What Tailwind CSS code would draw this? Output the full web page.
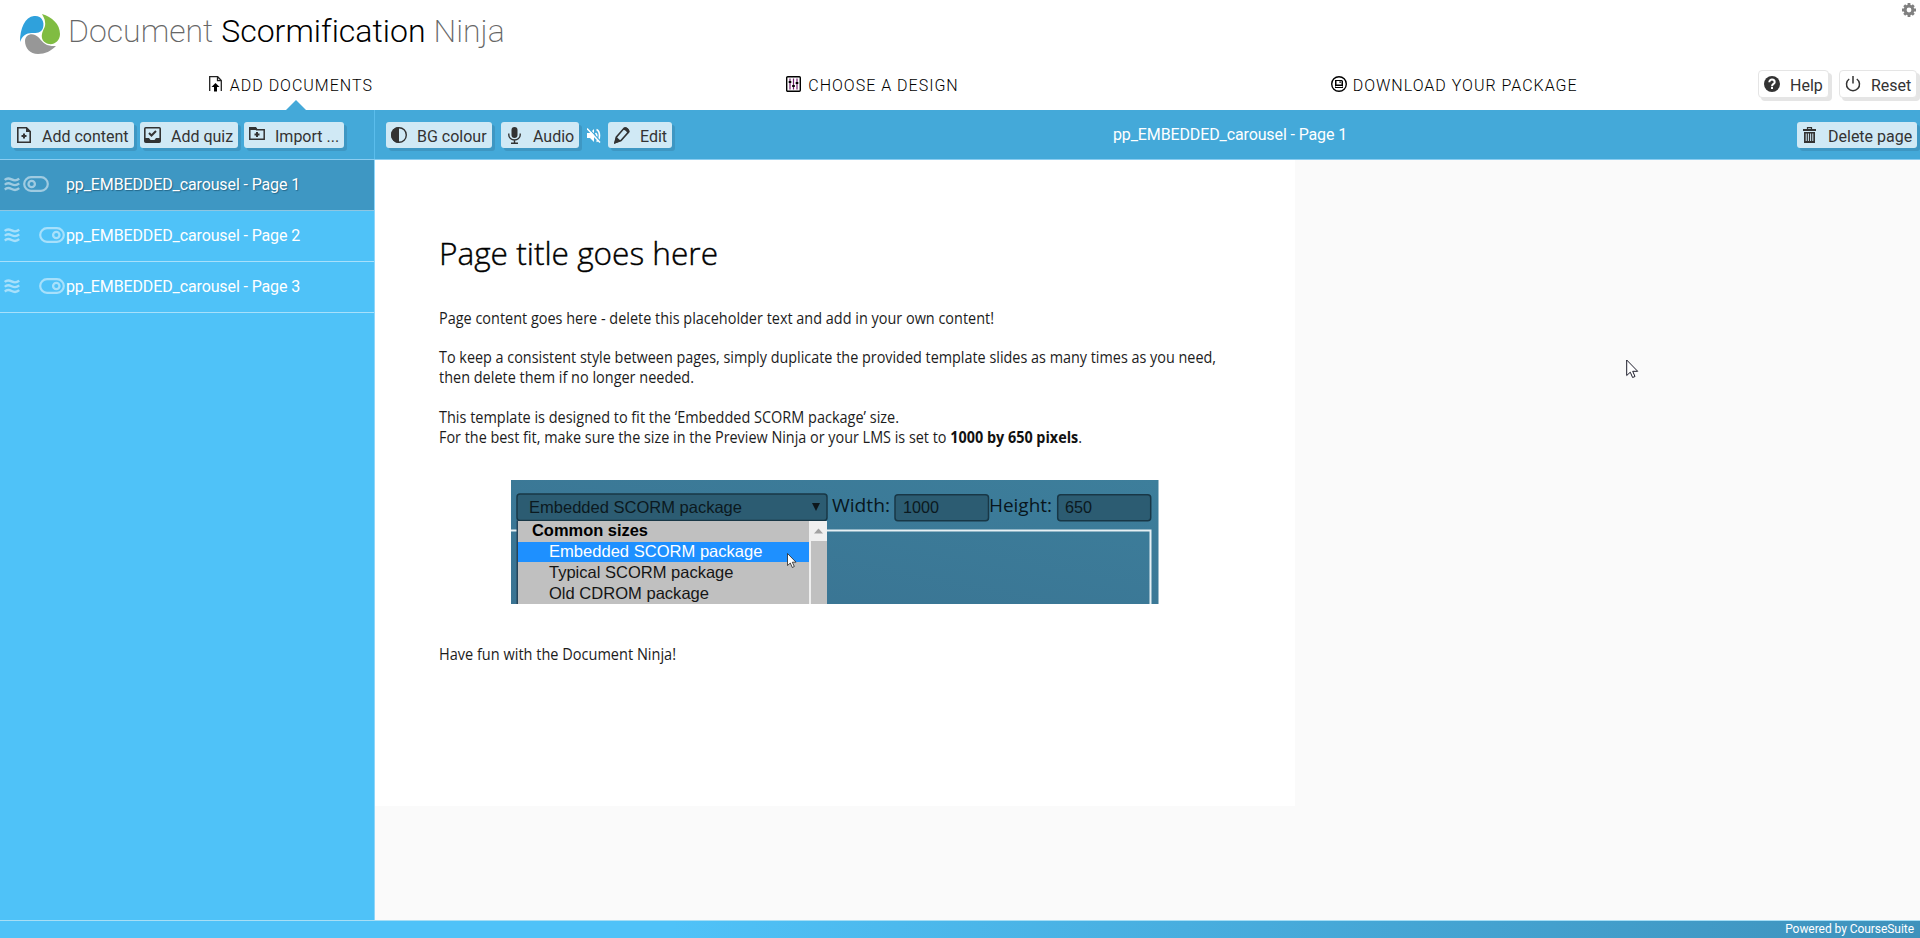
<!DOCTYPE html>
<html lang="en">
<head>
<meta charset="utf-8">
<title>Document Scormification Ninja</title>
<script src="https://cdn.jsdelivr.net/npm/@tailwindcss/browser@4"></script>
</head>
<body class="relative flex h-[938px] w-[1920px] flex-col overflow-hidden bg-white font-['Roboto',sans-serif] text-base leading-[26px] text-[#333]">

<header class="flex h-[110px] shrink-0 flex-col">
  <div class="flex h-[66px] items-start justify-between pl-5 pr-[4px]">
    <div class="flex">
      <svg class="mt-[14px] h-10 w-10" viewBox="0 0 40 40">
        <path fill="#2fa1dc" d="M0 28C0 14 5 3 14 2c7-1 11 5 9 12c-2 5-6 5-11 5C6 19 2 22 0 28z"/>
        <path fill="#80bc42" d="M22 0c10 3 18 10 18 20c0 7-6 11-11 10c-6-1-8-6-7-10c1-5 4-7 3-12C25 5 23 2 22 0z"/>
        <path fill="#979797" d="M5 27c0-5 5-8 10-6c5 2 6 7 12 10c3 1 6 1 9 1c-5 5-11 8-18 8C10 40 5 34 5 27z"/>
      </svg>
      <h1 class="mt-[11px] ml-2 whitespace-nowrap text-[32px] leading-10 font-light tracking-[0.02px] text-black"><span class="font-extralight text-[#666]">Document</span> Scormification <span class="font-extralight text-[#666]">Ninja</span></h1>
    </div>
    <svg class="mt-[3px] h-[14px] w-[14px]" viewBox="0 0 14 14"><circle cx="7" cy="7" r="3.900" fill="none" stroke="#808080" stroke-width="3"/><path stroke="#808080" stroke-width="2.800" d="M7 0v2.500M7 11.500V14M0 7h2.500M11.500 7H14M2.200 2.200l1.600 1.600M10.200 10.200l1.600 1.600M2.200 11.800l1.600-1.600M10.200 3.800l1.600-1.600"/></svg>
  </div>
  <div class="flex h-11 items-start">
    <nav class="grid w-[1745px] grid-cols-3 pt-[7px] font-light tracking-[1px] text-black">
      <a class="flex justify-center gap-2"><svg class="mt-[3px] h-4 w-[13px]" viewBox="0 0 13 16"><path fill="none" stroke="#222" stroke-width="1.300" d="M.7 15V.7h8L12.300 4.500V15M8.500.7v4h4"/><path d="M6.500 7l4 4H8v4.500H5V11H2.500z"/></svg>ADD DOCUMENTS</a>
      <a class="flex justify-center gap-[7px]"><svg class="mt-[3px] h-4 w-[15px]" viewBox="0 0 15 16"><rect x=".7" y=".7" width="13.600" height="14.600" rx="1" fill="none" stroke="#000" stroke-width="1.400"/><path stroke="#70206f" stroke-width="1.200" d="M4 2.500v11M7.500 2.500v11M11 2.500v11"/><path d="M2.700 5h2.600v2H2.700zM6.200 9h2.600v2H6.200zM9.700 6h2.600v2H9.700z"/></svg>CHOOSE A DESIGN</a>
      <a class="flex justify-center gap-[6px]"><svg class="mt-[3px] h-4 w-4" viewBox="0 0 16 16"><circle cx="8" cy="8" r="7.300" fill="none" stroke="#000" stroke-width="1.400"/><path fill-rule="evenodd" d="M4 4h7l1 1v7H4zM5.500 5v3.500h5V5zM4.500 10v1h7v-1z"/><path d="M8.500 5.300h1.200v1.700H8.500z"/></svg>DOWNLOAD YOUR PACKAGE</a>
    </nav>
    <div class="flex gap-[10px] pl-[13px] pt-1">
      <button class="flex h-7 w-[71px] rounded-sm border border-[#e5e5e5] bg-white pl-[5px] shadow-[3px_3px_0_#e5e5e5]"><svg class="mt-[5px] h-4 w-4" viewBox="0 0 16 16"><circle cx="8" cy="8" r="8" fill="#333"/><path fill="none" stroke="#fff" stroke-width="2" d="M5.300 6.200c0-3.500 5.400-3.400 5.400 0c0 1.700-2.700 1.800-2.700 4"/><path fill="#fff" d="M7 11h2v2H7z"/></svg><span class="ml-[10px] mt-[2px]">Help</span></button>
      <button class="flex h-7 w-[78px] rounded-sm border border-[#e5e5e5] bg-white pl-[5px] shadow-[3px_3px_0_#e5e5e5]"><svg class="mt-[5px] h-4 w-4" viewBox="0 0 16 16"><path fill="none" stroke="#333" stroke-width="1.500" d="M8 0v7.500M4.200 3a6.500 6.500 0 1 0 7.600 0"/></svg><span class="ml-[10px] mt-[2px]">Reset</span></button>
    </div>
  </div>
</header>
<div class="absolute left-[286px] top-[100px] h-[10px] w-5 bg-[#44a9d9] [clip-path:polygon(50%_0,100%_100%,0_100%)]"></div>

<div class="flex h-[50px] shrink-0 border-b border-[#8ccdf0] bg-[#44a9d9]">
  <div class="flex w-[375px] gap-[6px] border-r border-[#5bbdec] pl-[11px] pt-3">
    <button class="flex h-[26px] w-[123px] rounded-[3px] bg-[#d0e9f5] pl-[6px] shadow-[3px_3px_0_#3e97c3]"><svg class="mt-[5px] h-4 w-[14px]" viewBox="0 0 14 16"><path fill="none" stroke="#333" stroke-width="1.600" d="M.8.8h8.700l3.700 3.700v10.700H.8z"/><path fill="#333" d="M9 0l5 5H9zM6 6.500h2v1.500h1.500v2H8v1.500H6V10H4.500V8H6z"/></svg><span class="ml-[11px] mt-[2px]">Add content</span></button>
    <button class="flex h-[26px] w-[98px] rounded-[3px] bg-[#d0e9f5] pl-[4px] shadow-[3px_3px_0_#3e97c3]"><svg class="mt-[5px] h-4 w-[17px]" viewBox="0 0 17 16"><rect x=".8" y=".8" width="15.400" height="14.400" rx="1" fill="none" stroke="#333" stroke-width="1.600"/><path fill="#333" d="M1 11h4l1.500 2h4l1.500-2h4v4H1z"/><path fill="none" stroke="#333" stroke-width="2" d="M5 6l2.500 2.500L12 4"/></svg><span class="ml-[10px] mt-[2px]">Add quiz</span></button>
    <button class="flex h-[26px] w-[100px] rounded-[3px] bg-[#d0e9f5] pl-[5px] shadow-[3px_3px_0_#3e97c3]"><svg class="mt-[5px] h-[13px] w-4" viewBox="0 0 16 13"><path fill="none" stroke="#333" stroke-width="1.500" d="M.8 12.200V.8H6l1.500 2h7.700v9.400z"/><path fill="#333" d="M0 0h7l2 3H0zM7 5h2v1.500h1.500v2H9V10H7V8.500H5.500v-2H7z"/></svg><span class="ml-[10px] mt-[2px]">Import ...</span></button>
  </div>
  <div class="flex w-[738px] pl-[11px] pt-3">
    <button class="flex h-[26px] w-[106px] rounded-[3px] bg-[#d0e9f5] pl-[5px] shadow-[3px_3px_0_#3e97c3]"><svg class="mt-[5px] h-4 w-4" viewBox="0 0 16 16"><circle cx="8" cy="8" r="7.300" fill="none" stroke="#333" stroke-width="1.400"/><path fill="#333" d="M8 0a8 8 0 0 0 0 16z"/></svg><span class="ml-[10px] mt-[2px] whitespace-nowrap">BG colour</span></button>
    <button class="ml-[9px] flex h-[26px] w-[78px] rounded-[3px] bg-[#d0e9f5] pl-[7px] shadow-[3px_3px_0_#3e97c3]"><svg class="mt-[5px] h-[17px] w-[13px]" viewBox="0 0 13 17"><rect x="3.500" width="6" height="11" rx="3" fill="#333"/><path fill="none" stroke="#333" stroke-width="1.400" d="M.8 6.500v1.500a5.700 5 0 0 0 11.400 0V6.500M6.500 13v3M3 16.200h7"/></svg><span class="ml-[12px] mt-[2px]">Audio</span></button>
    <svg class="ml-2 mt-[6px] h-[15px] w-[14px]" viewBox="0 0 14 15"><path fill="#fff" d="M0 5h3l4-4v13l-4-4H0z"/><path fill="none" stroke="#fff" stroke-width="1.600" d="M8.500 5c1.500 1.500 1.500 3.500 0 5M9.500 1.500c4 2 4 10 0 12"/><path stroke="#44a9d9" stroke-width="1.200" d="M1.500 0l12.500 14"/><path stroke="#fff" stroke-width="1.500" d="M0 .5l13 14"/></svg>
    <button class="ml-[7px] flex h-[26px] w-[64px] rounded-[3px] bg-[#d0e9f5] pl-[6px] shadow-[3px_3px_0_#3e97c3]"><svg class="mt-[5px] h-[17px] w-4" viewBox="0 0 16 17"><path fill="none" stroke="#333" stroke-width="1.600" d="M1 15.500l1.500-5.500L10 1.300c1.800-1 5 1.700 4.500 3.800L7 13.500z"/><path fill="#333" d="M0 17l2-7.500L7 14zM8.500 2.500L10.500.5c2-.8 5.500 2 5 4.500l-2 2c0-2-2.500-4.500-5-4.500z"/></svg><span class="ml-[10px] mt-[2px]">Edit</span></button>
  </div>
  <div class="w-[684px] pt-[12px] font-normal tracking-[-0.12px] text-white">pp_EMBEDDED_carousel - Page 1</div>
  <button class="mt-3 flex h-[26px] w-[120px] rounded-[3px] bg-[#d0e9f5] pl-[6px] shadow-[3px_3px_0_#3e97c3]"><svg class="mt-[5px] h-4 w-[13px]" viewBox="0 0 13 16"><path fill="none" stroke="#333" stroke-width="1.200" d="M4.500 2V.6h4V2"/><path fill="#333" d="M0 2h13v2H0z"/><path fill="#333" fill-rule="evenodd" d="M1 5h11v11H1zM2.700 6.500V14h1V6.500zM4.900 6.500V14h1V6.500zM7.100 6.500V14h1V6.500zM9.300 6.500V14h1V6.500z"/></svg><span class="ml-[12px] mt-[2px] whitespace-nowrap">Delete page</span></button>
</div>

<div class="flex h-[760px] shrink-0">
  <aside class="w-[375px] border-r border-[#8fd6fa] bg-[#4fc2f8] text-white">
    <div class="flex h-[51px] items-center border-b border-[#8ec6e2] bg-[#3e97c3] pl-1 pb-[2px]">
      <svg class="h-4 w-4 shrink-0" viewBox="0 0 16 16"><path fill="none" stroke="#9fcbe1" stroke-width="2.400" d="M.8 4c2-2.200 4.200-2 6.800-.6s5 1.500 7.600-.8M.8 8.800c2-2.200 4.200-2 6.800-.6s5 1.500 7.600-.8M.8 13.600c2-2.200 4.200-2 6.800-.6s5 1.500 7.600-.8"/></svg>
      <svg class="ml-[3px] h-4 w-[26px] shrink-0" viewBox="0 0 26 16"><rect x="1.200" y="1.200" width="23.600" height="13.600" rx="6.800" fill="none" stroke="#9fcbe1" stroke-width="2.200"/><circle cx="8.700" cy="8" r="3.200" fill="none" stroke="#9fcbe1" stroke-width="2.300"/></svg>
      <span class="ml-[17px] mt-[2px] tracking-[-0.12px] [text-shadow:1px_1px_1px_#24678a]">pp_EMBEDDED_carousel - Page 1</span>
    </div>
    <div class="flex h-[51px] items-center border-b border-[#a7e0fb] pl-1 pb-[2px]">
      <svg class="h-4 w-4 shrink-0" viewBox="0 0 16 16"><path fill="none" stroke="#a7e0fb" stroke-width="2.400" d="M.8 4c2-2.200 4.200-2 6.800-.6s5 1.500 7.600-.8M.8 8.800c2-2.200 4.200-2 6.800-.6s5 1.500 7.600-.8M.8 13.600c2-2.200 4.200-2 6.800-.6s5 1.500 7.600-.8"/></svg>
      <svg class="ml-[19px] h-4 w-[26px] shrink-0" viewBox="0 0 26 16"><rect x="1.200" y="1.200" width="23.600" height="13.600" rx="6.800" fill="none" stroke="#a7e0fb" stroke-width="2.200"/><circle cx="17.300" cy="8" r="3.200" fill="none" stroke="#a7e0fb" stroke-width="2.300"/></svg>
      <span class="ml-[1px] mt-[2px] tracking-[-0.12px]">pp_EMBEDDED_carousel - Page 2</span>
    </div>
    <div class="flex h-[51px] items-center border-b border-[#a7e0fb] pl-1 pb-[2px]">
      <svg class="h-4 w-4 shrink-0" viewBox="0 0 16 16"><path fill="none" stroke="#a7e0fb" stroke-width="2.400" d="M.8 4c2-2.200 4.200-2 6.800-.6s5 1.500 7.600-.8M.8 8.800c2-2.200 4.200-2 6.800-.6s5 1.500 7.600-.8M.8 13.600c2-2.200 4.200-2 6.800-.6s5 1.500 7.600-.8"/></svg>
      <svg class="ml-[19px] h-4 w-[26px] shrink-0" viewBox="0 0 26 16"><rect x="1.200" y="1.200" width="23.600" height="13.600" rx="6.800" fill="none" stroke="#a7e0fb" stroke-width="2.200"/><circle cx="17.300" cy="8" r="3.200" fill="none" stroke="#a7e0fb" stroke-width="2.300"/></svg>
      <span class="ml-[1px] mt-[2px] tracking-[-0.12px]">pp_EMBEDDED_carousel - Page 3</span>
    </div>
  </aside>
  <main class="flex-1 bg-[#fafafa]">
    <!-- Slide preview -->
    <svg class="block h-[646px] w-[920px] bg-white" viewBox="375 160 920 646">
      <defs><linearGradient id="panel" x1="0" y1="1" x2="1" y2="0"><stop offset="0" stop-color="#397392"/><stop offset="1" stop-color="#3d7e9b"/></linearGradient></defs>
      <g class="font-['Open_Sans',sans-serif]" font-size="15.500" fill="#1c1c1c">
        <text x="439" y="265" font-size="31" font-weight="300" fill="#000" stroke="#000" stroke-width=".4" textLength="279" lengthAdjust="spacingAndGlyphs">Page title goes here</text>
        <text x="439" y="324" textLength="555" lengthAdjust="spacingAndGlyphs">Page content goes here - delete this placeholder text and add in your own content!</text>
        <text x="439" y="363" textLength="777" lengthAdjust="spacingAndGlyphs">To keep a consistent style between pages, simply duplicate the provided template slides as many times as you need,</text>
        <text x="439" y="383" textLength="255" lengthAdjust="spacingAndGlyphs">then delete them if no longer needed.</text>
        <text x="439" y="423" textLength="460" lengthAdjust="spacingAndGlyphs">This template is designed to fit the ‘Embedded SCORM package’ size.</text>
        <text x="439" y="443" textLength="643" lengthAdjust="spacingAndGlyphs">For the best fit, make sure the size in the Preview Ninja or your LMS is set to <tspan font-weight="700" fill="#111">1000 by 650 pixels</tspan>.</text>
        <text x="439" y="660" textLength="237" lengthAdjust="spacingAndGlyphs">Have fun with the Document Ninja!</text>
      </g>
      <rect x="511" y="480" width="647.500" height="124" fill="url(#panel)"/>
      <path d="M511 530.500H1150.500V604" fill="none" stroke="#e6f0f4" stroke-width="2"/>
      <rect x="517" y="494" width="310" height="26.500" rx="3" fill="#2c5c72" stroke="#183746" stroke-width="1.500"/>
      <rect x="895" y="494.700" width="93.500" height="26" rx="3" fill="#2c5c72" stroke="#183746" stroke-width="1.500"/>
      <rect x="1057.700" y="494.700" width="93" height="26" rx="3" fill="#2c5c72" stroke="#183746" stroke-width="1.500"/>
      <rect x="516.500" y="520.500" width="2" height="83.500" fill="#24445a"/>
      <rect x="518" y="521" width="309" height="83" fill="#c0c0c0"/>
      <rect x="518" y="542" width="291" height="20" fill="#1e90ff"/>
      <rect x="809" y="521" width="18" height="20" fill="#f0f0f0"/>
      <rect x="809" y="541" width="2" height="63" fill="#f0f0f0"/>
      <path d="M814 533.500l4.500-5 4.500 5z" fill="#a3a3a3"/>
      <path d="M812 503h8l-4 8z" fill="#0d171c"/>
      <g class="font-['Liberation_Sans',sans-serif]" font-size="16.500" fill="#0b1920">
        <text x="529" y="512.500" textLength="213" lengthAdjust="spacingAndGlyphs">Embedded SCORM package</text>
        <text x="532" y="536" fill="#000" font-weight="700" textLength="116" lengthAdjust="spacingAndGlyphs">Common sizes</text>
        <text x="549" y="557" fill="#fff" textLength="213.500" lengthAdjust="spacingAndGlyphs">Embedded SCORM package</text>
        <text x="549" y="577.500" fill="#151515" textLength="184.500" lengthAdjust="spacingAndGlyphs">Typical SCORM package</text>
        <text x="549" y="598.500" fill="#151515" textLength="160" lengthAdjust="spacingAndGlyphs">Old CDROM package</text>
        <text x="903" y="512.500" textLength="36" lengthAdjust="spacingAndGlyphs">1000</text>
        <text x="1065" y="512.500" textLength="27" lengthAdjust="spacingAndGlyphs">650</text>
      </g>
      <g class="font-['Open_Sans',sans-serif]" font-size="19" fill="#08161d">
        <text x="832" y="512" textLength="58" lengthAdjust="spacingAndGlyphs">Width:</text>
        <text x="989" y="512" textLength="63" lengthAdjust="spacingAndGlyphs">Height:</text>
      </g>
      <path d="M787.500 553.500v12l2.800-2.500 2 4.500 2-1-2-4.300h3.700z" fill="#fff" stroke="#222" stroke-width=".8"/>
    </svg>
  </main>
</div>

<footer class="flex h-[18px] shrink-0 justify-end border-t border-[#a7def5] bg-linear-to-r from-[#4fc2f8] from-35% to-[#3e92bc] pr-[6px] text-xs leading-4 tracking-[-0.05px] text-white">Powered by CourseSuite</footer>

<svg class="absolute left-[1626px] top-[359px] h-5 w-[13px]" viewBox="0 0 13 20"><path d="M.7 1v15.500l3.600-3.300 2.300 5.300 2.400-1-2.300-5.200h5z" fill="#fff" stroke="#1d1d2b" stroke-width="1"/></svg>
</body>
</html>
